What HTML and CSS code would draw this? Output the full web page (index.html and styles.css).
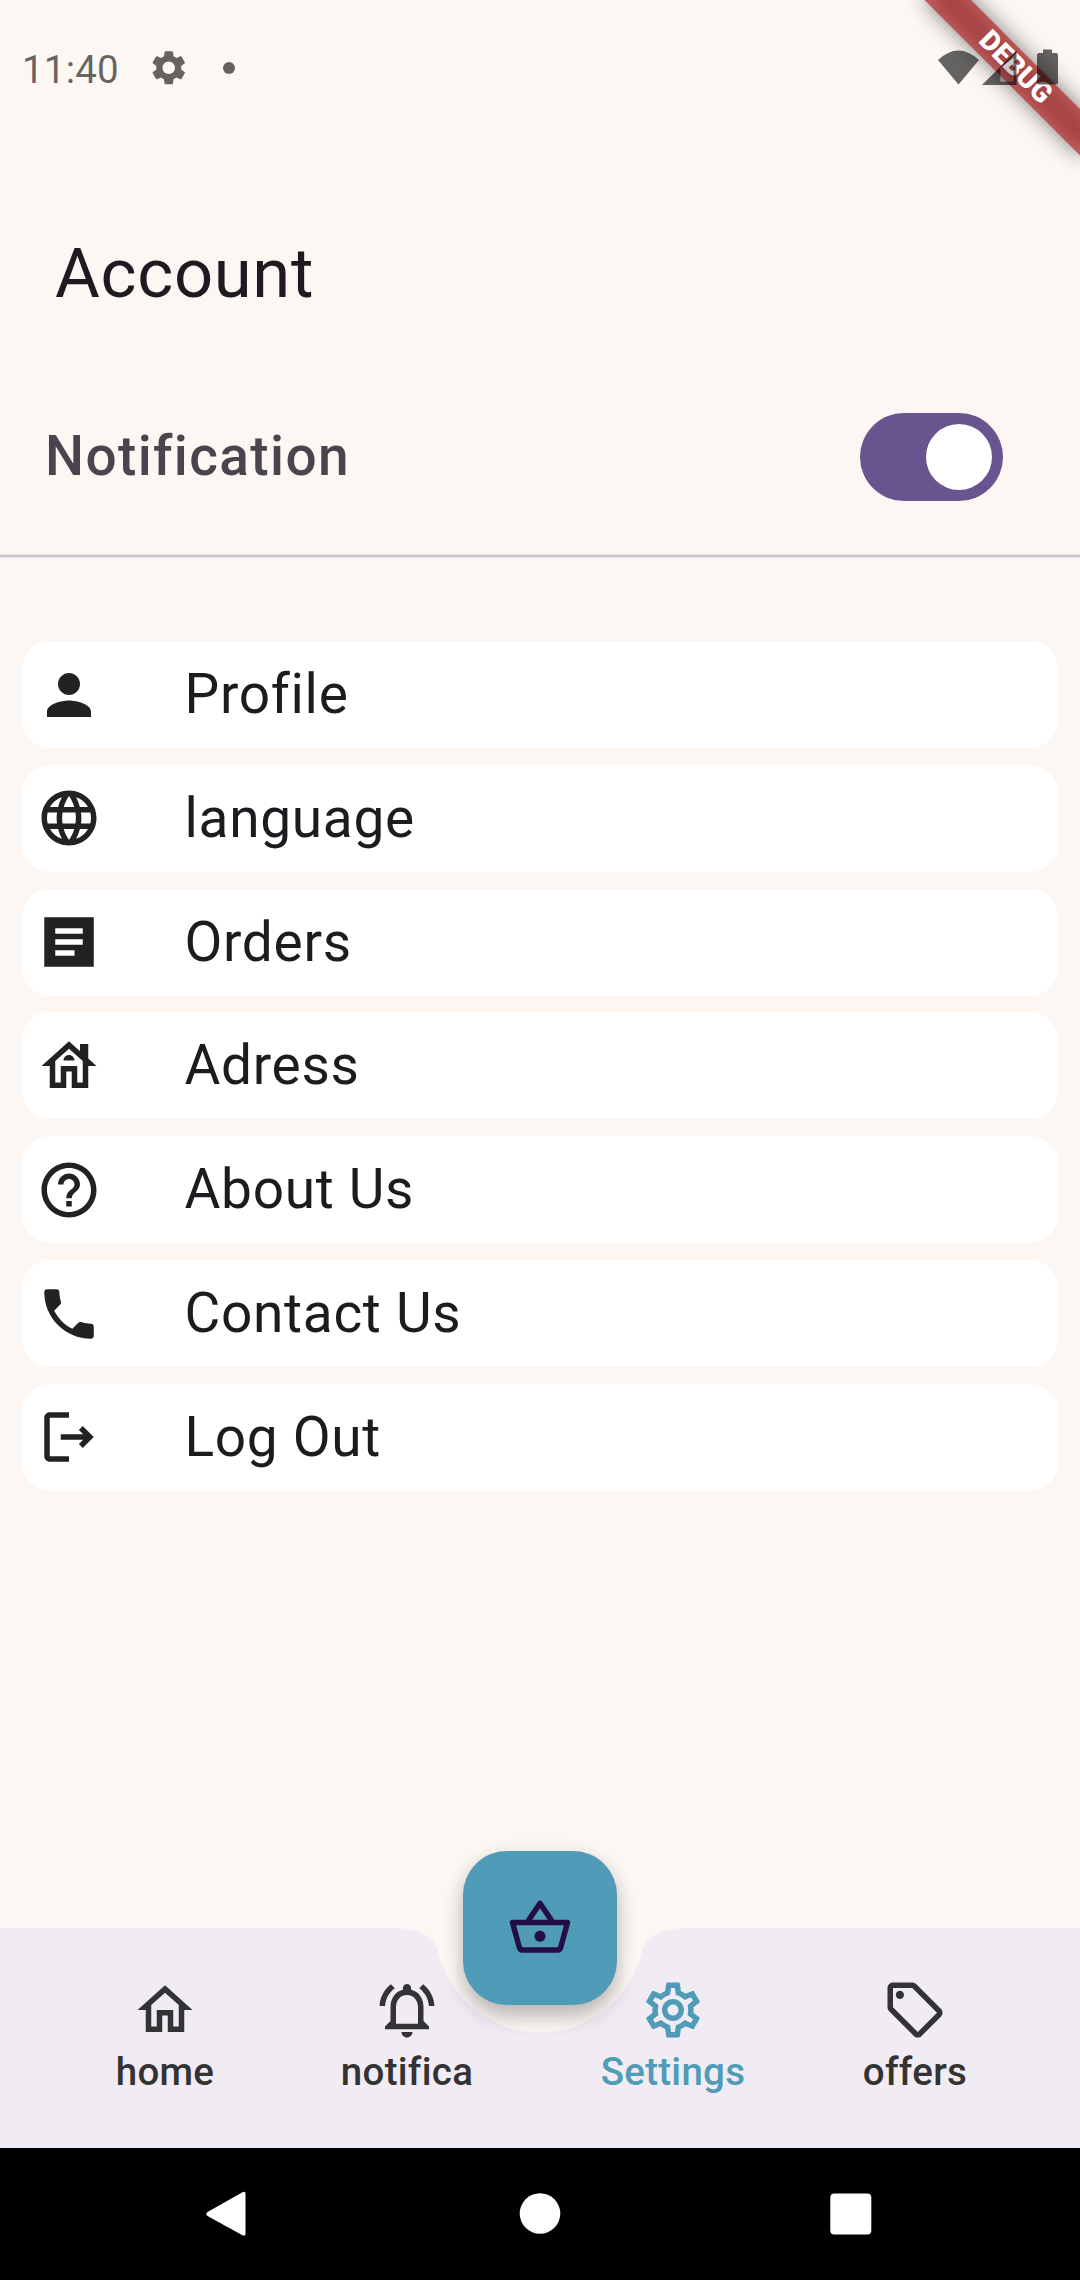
FILE: index.html
```html
<!DOCTYPE html>
<html lang="en">
<head>
<meta charset="utf-8">
<title>Account</title>
<link rel="stylesheet" href="styles.css">
</head>
<body>
<div class="screen">
  <header class="status">
    <span class="clock">11:40</span>
    <svg class="status-gear" viewBox="0 0 24 24"><path d="M19.14 12.94c.04-.3.06-.61.06-.94 0-.32-.02-.64-.07-.94l2.03-1.58c.18-.14.23-.41.12-.61l-1.92-3.32c-.12-.22-.37-.29-.59-.22l-2.39.96c-.5-.38-1.03-.7-1.62-.94l-.36-2.54c-.04-.24-.24-.41-.48-.41h-3.84c-.24 0-.43.17-.47.41l-.36 2.54c-.59.24-1.13.57-1.62.94l-2.39-.96c-.22-.08-.47 0-.59.22L2.74 8.87c-.12.21-.08.47.12.61l2.03 1.58c-.05.3-.09.63-.09.94s.02.64.07.94l-2.03 1.58c-.18.14-.23.41-.12.61l1.92 3.32c.12.22.37.29.59.22l2.39-.96c.5.38 1.03.7 1.62.94l.36 2.54c.05.24.24.41.48.41h3.84c.24 0 .44-.17.47-.41l.36-2.54c.59-.24 1.13-.56 1.62-.94l2.39.96c.22.08.47 0 .59-.22l1.92-3.32c.12-.22.07-.47-.12-.61l-2.01-1.58zM12 15.6c-1.98 0-3.6-1.62-3.6-3.6s1.62-3.6 3.6-3.6 3.6 1.62 3.6 3.6-1.62 3.6-3.6 3.6z"/></svg>
    <span class="status-dot"></span>
    <svg class="status-right" viewBox="0 0 120 36">
      <path d="M0 10Q20.500-9 41 10L20.500 34.500z"/>
      <path fill-rule="evenodd" d="M44 35L78.500 .5V35zM62.500 17.500V31.500H75.500V8z"/>
      <path class="faint" d="M62.500 17.500V31.500H75.500V8z"/>
      <path d="M105-.5h9v3.500h4a2 2 0 0 1 2 2v27.500a2 2 0 0 1-2 2h-17a2 2 0 0 1-2-2V5a2 2 0 0 1 2-2h4z"/>
    </svg>
  </header>
  <div class="debug"><span>DEBUG</span></div>

  <main>
    <h1>Account</h1>
    <div class="notify">
      <span>Notification</span>
      <span class="switch"><span class="thumb"></span></span>
    </div>
    <div class="divider"></div>
    <ul class="menu">
      <li><svg viewBox="0 0 24 24"><path d="M12 12c2.210 0 4-1.790 4-4s-1.790-4-4-4-4 1.790-4 4 1.790 4 4 4zm0 2c-2.670 0-8 1.340-8 4v2h16v-2c0-2.660-5.330-4-8-4z"/></svg><span>Profile</span></li>
      <li><svg viewBox="0 0 24 24"><path d="M11.990 2C6.470 2 2 6.480 2 12s4.470 10 9.990 10C17.520 22 22 17.520 22 12S17.520 2 11.990 2zm6.930 6h-2.950c-.32-1.250-.78-2.450-1.380-3.560 1.840.63 3.370 1.910 4.330 3.560zM12 4.040c.83 1.200 1.480 2.530 1.910 3.960h-3.820c.43-1.430 1.080-2.760 1.910-3.960zM4.260 14C4.100 13.360 4 12.690 4 12s.1-1.360.26-2h3.380c-.08.66-.14 1.320-.14 2 0 .68.06 1.340.14 2H4.260zm.82 2h2.950c.32 1.250.78 2.450 1.380 3.560-1.840-.63-3.370-1.900-4.330-3.560zm2.950-8H5.080c.96-1.660 2.490-2.930 4.330-3.560C8.810 5.550 8.350 6.750 8.030 8zM12 19.960c-.83-1.200-1.480-2.530-1.910-3.960h3.820c-.43 1.430-1.080 2.760-1.910 3.960zM14.340 14H9.660c-.09-.66-.16-1.320-.16-2 0-.68.07-1.350.16-2h4.680c.09.65.16 1.320.16 2 0 .68-.07 1.340-.16 2zm.25 5.560c.6-1.110 1.060-2.310 1.380-3.560h2.950c-.96 1.650-2.490 2.930-4.330 3.560zM16.360 14c.08-.66.14-1.320.14-2 0-.68-.06-1.340-.14-2h3.380c.16.64.26 1.310.26 2s-.1 1.360-.26 2h-3.380z"/></svg><span>language</span></li>
      <li><svg viewBox="0 0 24 24"><path d="M21 3H3v18h18V3zM14 17H7v-2h7v2zm3-4H7v-2h10v2zm0-4H7V7h10v2z"/></svg><span>Orders</span></li>
      <li><svg viewBox="0 0 24 24"><path d="M19 9.300V4h-3v2.600L12 3 2 12h3v8h6v-6h2v6h6v-8h3L19 9.300zM17 18h-2v-6H9v6H7v-7.810l5-4.500 5 4.500V18zM10 10h4c0-1.100-.9-2-2-2s-2 .9-2 2z"/></svg><span>Adress</span></li>
      <li><svg viewBox="0 0 24 24"><path d="M11 18h2v-2h-2v2zm1-16C6.480 2 2 6.480 2 12s4.480 10 10 10 10-4.480 10-10S17.520 2 12 2zm0 18c-4.410 0-8-3.590-8-8s3.590-8 8-8 8 3.590 8 8-3.590 8-8 8zm0-14c-2.210 0-4 1.790-4 4h2c0-1.100.9-2 2-2s2 .9 2 2c0 2-3 1.750-3 5h2c0-2.250 3-2.500 3-5 0-2.210-1.790-4-4-4z"/></svg><span>About Us</span></li>
      <li><svg viewBox="0 0 24 24"><path d="M20 15.500c-1.250 0-2.450-.2-3.570-.57-.35-.11-.74-.03-1.020.24l-2.200 2.200c-2.830-1.440-5.150-3.750-6.590-6.590l2.200-2.210c.28-.26.36-.65.25-1C8.700 6.450 8.500 5.250 8.500 4c0-.55-.45-1-1-1H4c-.55 0-1 .45-1 1 0 9.390 7.610 17 17 17 .55 0 1-.45 1-1v-3.500c0-.55-.45-1-1-1z"/></svg><span>Contact Us</span></li>
      <li><svg viewBox="0 0 24 24"><path d="M17 8l-1.410 1.410L17.170 11H9v2h8.170l-1.580 1.580L17 16l4-4-4-4zM5 5h7V3H5c-1.100 0-2 .9-2 2v14c0 1.100.9 2 2 2h7v-2H5V5z"/></svg><span>Log Out</span></li>
    </ul>
  </main>

  <nav class="tabs">
    <svg class="tabs-bg" viewBox="0 0 1080 220"><path d="M0 0H391.500Q432.750 0 438.180 23.510A104.500 104.500 0 0 0 641.820 23.510Q647.250 0 688.500 0H1080V220H0z"/></svg>
    <div class="tab"><svg viewBox="0 0 24 24"><path d="M12 5.690l5 4.500V18h-2v-6H9v6H7v-7.810l5-4.500M12 3L2 12h3v8h6v-6h2v6h6v-8h3L12 3z"/></svg><span>home</span></div>
    <div class="tab"><svg viewBox="0 0 24 24"><path d="M12 22c1.100 0 2-.9 2-2h-4c0 1.100.9 2 2 2zm6-6v-5c0-3.070-1.630-5.640-4.500-6.320V4c0-.83-.67-1.500-1.500-1.500s-1.500.67-1.500 1.500v.68C7.640 5.360 6 7.920 6 11v5l-2 2v1h16v-1l-2-2zm-2 1H8v-6c0-2.480 1.510-4.500 4-4.500s4 2.020 4 4.500v6zM7.580 4.080L6.150 2.650C3.750 4.480 2.170 7.300 2.030 10.500h2c.15-2.650 1.510-4.970 3.550-6.420zm12.390 6.420h2c-.15-3.200-1.730-6.020-4.120-7.850l-1.420 1.430c2.020 1.450 3.390 3.770 3.540 6.420z"/></svg><span>notifica</span></div>
    <div class="tab tab-active"><svg viewBox="0 0 24 24"><path d="M19.430 12.980c.04-.32.07-.64.07-.98 0-.34-.03-.66-.07-.98l2.110-1.650c.19-.15.24-.42.12-.64l-2-3.460c-.09-.16-.26-.25-.44-.25-.06 0-.12.01-.17.03l-2.490 1c-.52-.4-1.080-.73-1.690-.98l-.38-2.650C14.460 2.180 14.250 2 14 2h-4c-.25 0-.46.18-.49.42l-.38 2.650c-.61.25-1.170.59-1.690.98l-2.490-1c-.06-.02-.12-.03-.18-.03-.17 0-.34.09-.43.25l-2 3.460c-.13.22-.07.49.12.64l2.110 1.650c-.04.32-.07.65-.07.98 0 .33.03.66.07.98l-2.110 1.650c-.19.15-.24.42-.12.64l2 3.460c.09.16.26.25.44.25.06 0 .12-.01.17-.03l2.490-1c.52.4 1.080.73 1.690.98l.38 2.650c.03.24.24.42.49.42h4c.25 0 .46-.18.49-.42l.38-2.650c.61-.25 1.170-.59 1.690-.98l2.490 1c.06.02.12.03.18.03.17 0 .34-.09.43-.25l2-3.460c.12-.22.07-.49-.12-.64l-2.110-1.650zm-1.980-1.710c.04.31.05.52.05.73 0 .21-.02.43-.05.73l-.14 1.130.89.7 1.080.84-.7 1.210-1.270-.51-1.040-.42-.9.68c-.43.32-.84.56-1.250.73l-1.060.43-.16 1.130-.2 1.350h-1.400l-.19-1.350-.16-1.130-1.060-.43c-.43-.18-.83-.41-1.230-.71l-.91-.7-1.060.43-1.270.51-.7-1.210 1.080-.84.89-.7-.14-1.130c-.03-.31-.05-.54-.05-.74s.02-.43.05-.73l.14-1.130-.89-.7-1.080-.84.7-1.210 1.270.51 1.040.42.9-.68c.43-.32.84-.56 1.250-.73l1.060-.43.16-1.130.2-1.350h1.390l.19 1.350.16 1.130 1.060.43c.43.18.83.41 1.230.71l.91.7 1.060-.43 1.270-.51.7 1.210-1.070.85-.89.7.14 1.130zM12 8c-2.210 0-4 1.790-4 4s1.790 4 4 4 4-1.790 4-4-1.790-4-4-4zm0 6c-1.100 0-2-.9-2-2s.9-2 2-2 2 .9 2 2-.9 2-2 2z"/></svg><span>Settings</span></div>
    <div class="tab"><svg viewBox="0 0 24 24"><path fill-rule="evenodd" d="M21.410 11.580l-9-9C12.050 2.220 11.550 2 11 2H4c-1.100 0-2 .9-2 2v7c0 .55.22 1.050.59 1.420l9 9c.36.36.86.58 1.410.58s1.050-.22 1.410-.59l7-7c.37-.36.59-.86.59-1.410s-.23-1.060-.59-1.420zM13 20.010L4 11V4h7v-.01l9 9-7 7.020z"/><circle cx="6.500" cy="6.500" r="1.500"/></svg><span>offers</span></div>
    <div class="fab"><svg viewBox="0 0 24 24"><path d="M22 9h-4.790l-4.380-6.560c-.19-.28-.51-.42-.83-.42s-.64.14-.83.43L6.790 9H2c-.55 0-1 .45-1 1 0 .09.01.18.04.27l2.540 9.270c.23.84 1 1.460 1.920 1.460h13c.92 0 1.690-.62 1.930-1.460l2.540-9.270L23 10c0-.55-.45-1-1-1zM12 4.800L14.800 9H9.200L12 4.800zM18.500 19l-12.990.01L3.310 11H20.700l-2.200 8zM12 13c-1.100 0-2 .9-2 2s.9 2 2 2 2-.9 2-2-.9-2-2-2z"/></svg></div>
  </nav>

  <footer class="system">
    <svg viewBox="0 0 42 46"><path d="M1.500 21L36 1.500Q39.500-.5 39.500 3V42.500Q39.500 46 36 44L1.500 25Q-1 23 1.500 21z"/></svg>
    <svg viewBox="0 0 42 46"><circle cx="22" cy="22.500" r="20.300"/></svg>
    <svg viewBox="0 0 42 46"><rect x=".3" y="2.500" width="41" height="41" rx="4"/></svg>
  </footer>
</div>
</body>
</html>
```
FILE: styles.css
```css
* { box-sizing: border-box; }
body {
  margin: 0;
  background: #fcf7f3;
  font-family: Roboto, "Noto Sans", sans-serif;
  color: #1d1b20;
}
.screen {
  position: relative;
  width: 1080px;
  height: 2280px;
  overflow: hidden;
  display: flex;
  flex-direction: column;
}
svg { display: block; fill: currentColor; overflow: visible; flex: none; }

/* Status bar */
.status {
  position: relative;
  z-index: 2;
  height: 135px;
  padding: 0 22px;
  display: flex;
  align-items: center;
  color: rgba(0, 0, 0, .6);
}
.clock { font-size: 38.5px; line-height: 46px; letter-spacing: .2px; width: 125.500px; padding-top: 4px; }
.status-gear { width: 41.500px; height: 41.500px; }
.status-dot { width: 12px; height: 12px; border-radius: 50%; margin-left: 34px; background: currentColor; }
.status-right { width: 120px; height: 36px; margin-left: auto; }
.faint { opacity: .35; }

/* Corner ribbon, rotated about the top right corner of the screen */
.debug {
  position: absolute;
  z-index: 1;
  top: 77px;
  left: 970px;
  width: 220px;
  height: 33px;
  transform-origin: 110px -77px;
  transform: rotate(45deg);
}
.debug::before {
  content: "";
  position: absolute;
  inset: 0;
  background: rgba(0, 0, 0, .5);
  filter: blur(10.900px);
}
.debug span {
  position: absolute;
  inset: 0;
  padding-left: 4px;
  background: rgba(183, 28, 28, .627);
  color: #fff;
  font-size: 28.050px;
  font-weight: 900;
  line-height: 31px;
  text-align: center;
}

main { flex: 1; }
h1 {
  margin: 99px 0 0 55px;
  font-size: 68.750px;
  font-weight: 400;
  line-height: 80px;
  letter-spacing: .688px;
}
.notify {
  height: 88px;
  margin-top: 99px;
  padding: 0 77px 0 45px;
  display: flex;
  align-items: center;
  justify-content: space-between;
  color: #49454f;
  font-size: 55px;
  font-weight: 500;
  letter-spacing: 1.375px;
}
.notify > span:first-child { padding-bottom: 2px; }
.switch {
  width: 143px;
  height: 88px;
  padding: 11px;
  border-radius: 44px;
  background: #68548e;
  display: flex;
  justify-content: flex-end;
}
.thumb { width: 66px; height: 66px; border-radius: 50%; background: #fff; }
.divider {
  height: 4px;
  margin-top: 53px;
  background: linear-gradient(#e6e0e4 0 1px, #cac4d0 1px 3px, #e6e0e4 3px);
}

/* Menu */
.menu {
  list-style: none;
  margin: 83px 22px 0;
  padding: 0;
  display: flex;
  flex-direction: column;
  gap: 16.830px;
}
.menu li {
  height: 107px;
  padding-left: 13.500px;
  border-radius: 27.500px;
  background: #fff;
  display: flex;
  align-items: center;
  gap: 83px;
  font-size: 55px;
  line-height: 64px;
  letter-spacing: .688px;
}
.menu svg { width: 66px; height: 66px; color: #222; }
.menu span { padding-bottom: 1px; }

/* Bottom tabs */
.tabs {
  position: relative;
  height: 220px;
  padding: 49px 44px 0;
  display: flex;
}
.tabs-bg { position: absolute; inset: 0; width: 1080px; height: 220px; color: #f1ecf4; }
.tab {
  position: relative;
  width: 242px;
  display: flex;
  flex-direction: column;
  align-items: center;
  color: #333;
  font-size: 38.500px;
  font-weight: 500;
  line-height: 57px;
  letter-spacing: .275px;
}
.tab svg { width: 66px; height: 66px; }
.tab-active { margin-left: 24px; color: #509bb7; }
.fab {
  position: absolute;
  left: 463px;
  top: -77px;
  width: 154px;
  height: 154px;
  border-radius: 44px;
  background: #509bb7;
  color: #230f46;
  display: grid;
  place-items: center;
  box-shadow: 0 12px 20px rgba(0, 0, 0, .22), 0 4px 22px rgba(0, 0, 0, .08);
}
.fab svg { width: 66px; height: 66px; }

/* System navigation */
.system {
  height: 132px;
  padding: 0 208px 0 206px;
  background: #000;
  color: #fff;
  display: flex;
  align-items: center;
  justify-content: space-between;
}
.system svg { width: 42px; height: 46px; }
```
